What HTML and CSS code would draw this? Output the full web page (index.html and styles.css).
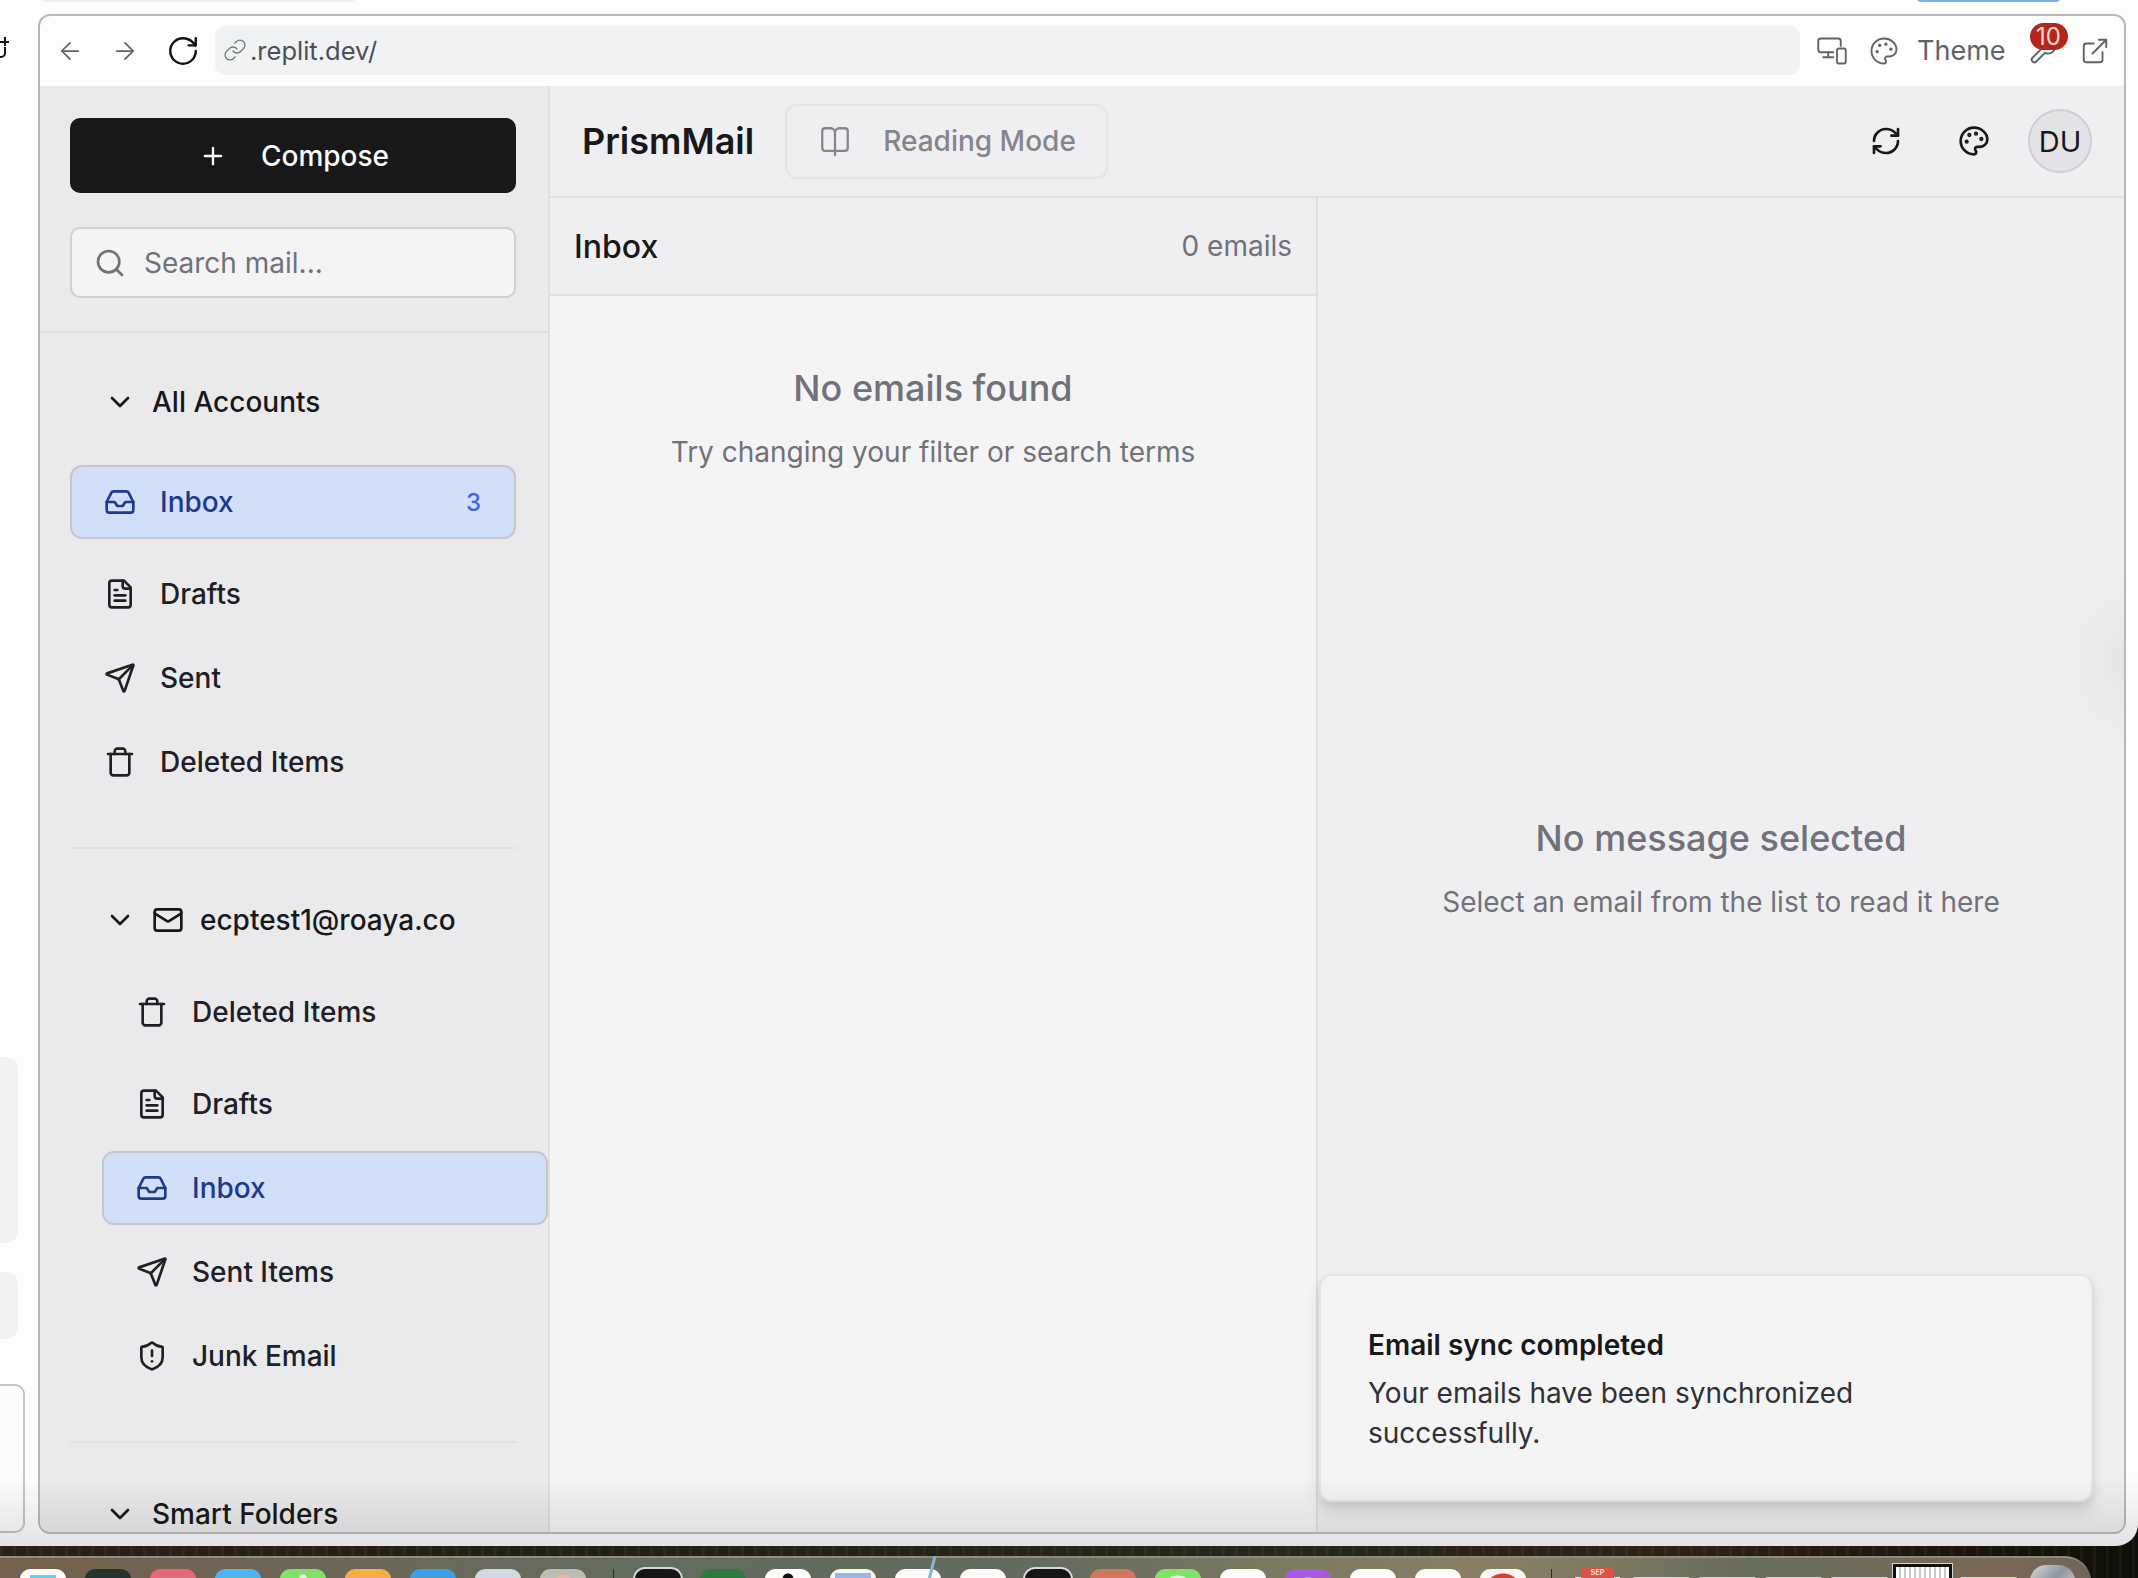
FILE: index.html
```html
<!DOCTYPE html>
<html lang="en">
<head>
<meta charset="utf-8">
<title>PrismMail</title>
<link rel="stylesheet" href="styles.css">
</head>
<body>
<svg class="defs" width="0" height="0" aria-hidden="true">
  <symbol id="i-left" viewBox="0 0 24 24"><path d="m12 19-7-7 7-7"/><path d="M19 12H5"/></symbol>
  <symbol id="i-right" viewBox="0 0 24 24"><path d="M5 12h14"/><path d="m12 5 7 7-7 7"/></symbol>
  <symbol id="i-reload" viewBox="0 0 24 24"><path d="M21 12a9 9 0 1 1-9-9c2.52 0 4.93 1 6.74 2.74L21 8"/><path d="M21 3v5h-5"/></symbol>
  <symbol id="i-link" viewBox="0 0 24 24"><path d="M10 13a5 5 0 0 0 7.54.54l3-3a5 5 0 0 0-7.07-7.07l-1.72 1.71"/><path d="M14 11a5 5 0 0 0-7.54-.54l-3 3a5 5 0 0 0 7.07 7.07l1.71-1.71"/></symbol>
  <symbol id="i-plus" viewBox="0 0 24 24"><path d="M5 12h14"/><path d="M12 5v14"/></symbol>
  <symbol id="i-search" viewBox="0 0 24 24"><circle cx="11" cy="11" r="8"/><path d="m21 21-4.3-4.3"/></symbol>
  <symbol id="i-chevron" viewBox="0 0 24 24"><path d="m6 9 6 6 6-6"/></symbol>
  <symbol id="i-inbox" viewBox="0 0 24 24"><polyline points="22 12 16 12 14 15 10 15 8 12 2 12"/><path d="M5.45 5.11 2 12v6a2 2 0 0 0 2 2h16a2 2 0 0 0 2-2v-6l-3.45-6.89A2 2 0 0 0 16.76 4H7.24a2 2 0 0 0-1.79 1.11z"/></symbol>
  <symbol id="i-file" viewBox="0 0 24 24"><path d="M15 2H6a2 2 0 0 0-2 2v16a2 2 0 0 0 2 2h12a2 2 0 0 0 2-2V7Z"/><path d="M14 2v4a2 2 0 0 0 2 2h4"/><path d="M10 9H8"/><path d="M16 13H8"/><path d="M16 17H8"/></symbol>
  <symbol id="i-send" viewBox="0 0 24 24"><path d="M14.536 21.686a.5.5 0 0 0 .937-.024l6.5-19a.496.496 0 0 0-.635-.635l-19 6.5a.5.5 0 0 0-.024.937l7.93 3.18a2 2 0 0 1 1.112 1.11z"/><path d="m21.854 2.147-10.94 10.939"/></symbol>
  <symbol id="i-trash" viewBox="0 0 24 24"><path d="M3 6h18"/><path d="M19 6v14c0 1-1 2-2 2H7c-1 0-2-1-2-2V6"/><path d="M8 6V4c0-1 1-2 2-2h4c1 0 2 1 2 2v2"/></symbol>
  <symbol id="i-mail" viewBox="0 0 24 24"><rect width="20" height="16" x="2" y="4" rx="2"/><path d="m22 7-8.97 5.7a1.94 1.94 0 0 1-2.06 0L2 7"/></symbol>
  <symbol id="i-shield" viewBox="0 0 24 24"><path d="M20 13c0 5-3.5 7.5-7.66 8.95a1 1 0 0 1-.67-.01C7.5 20.5 4 18 4 13V6a1 1 0 0 1 1-1c2 0 4.5-1.2 6.24-2.72a1.17 1.17 0 0 1 1.52 0C14.51 3.81 17 5 19 5a1 1 0 0 1 1 1z"/><path d="M12 8v4"/><path d="M12 16h.01"/></symbol>
  <symbol id="i-book" viewBox="0 0 24 24"><path d="M12 6v16"/><path d="M12 19H5a2 2 0 0 1-2-2V5a2 2 0 0 1 2-2h4a3 3 0 0 1 3 3 3 3 0 0 1 3-3h4a2 2 0 0 1 2 2v12a2 2 0 0 1-2 2h-7z"/></symbol>
  <symbol id="i-refresh" viewBox="0 0 24 24"><path d="M3 12a9 9 0 0 1 9-9 9.75 9.75 0 0 1 6.74 2.74L21 8"/><path d="M21 3v5h-5"/><path d="M21 12a9 9 0 0 1-9 9 9.75 9.75 0 0 1-6.74-2.74L3 16"/><path d="M8 16H3v5"/></symbol>
  <symbol id="i-palette" viewBox="0 0 24 24"><circle cx="13.5" cy="6.5" r=".6" class="dot"/><circle cx="17.5" cy="10.5" r=".6" class="dot"/><circle cx="8.5" cy="7.5" r=".6" class="dot"/><circle cx="6.5" cy="12.5" r=".6" class="dot"/><path d="M12 2C6.5 2 2 6.5 2 12s4.5 10 10 10c.926 0 1.648-.746 1.648-1.688 0-.437-.18-.835-.437-1.125-.29-.289-.438-.652-.438-1.125a1.64 1.64 0 0 1 1.668-1.668h1.996c3.051 0 5.555-2.503 5.555-5.554C21.965 6.012 17.461 2 12 2z"/></symbol>
  <symbol id="i-wrench" viewBox="0 0 24 24"><path d="M14.7 6.3a1 1 0 0 0 0 1.4l1.6 1.6a1 1 0 0 0 1.4 0l3.77-3.77a6 6 0 0 1-7.94 7.94l-6.91 6.91a2.12 2.12 0 0 1-3-3l6.91-6.91a6 6 0 0 1 7.94-7.94l-3.76 3.76z"/></symbol>
  <symbol id="i-external" viewBox="0 0 24 24"><path d="M15 3h6v6"/><path d="M10 14 21 3"/><path d="M18 13v6a2 2 0 0 1-2 2H5a2 2 0 0 1-2-2V8a2 2 0 0 1 2-2h6"/></symbol>
  <symbol id="i-devices" viewBox="0 0 24 24"><path d="M19 8V4a2 2 0 0 0-2-2H3a2 2 0 0 0-2 2v7a2 2 0 0 0 2 2h10"/><path d="M9 13v4"/><path d="M5 17h8"/><rect x="16" y="10" width="7" height="12" rx="1.6"/></symbol>
</svg>

<div class="desktop">
  <div class="tab tab-gray"></div>
  <div class="tab tab-blue"></div>
  <svg class="edge-glyph" viewBox="0 0 9 22"><path d="M-6 14v3a4 4 0 0 0 4 4h3a4 4 0 0 0 4-4v-6"/><path d="M5 1v9"/><path d="M0 6h9"/></svg>
  <div class="side-card side-card-a"></div>
  <div class="side-card side-card-b"></div>
  <div class="side-card side-card-c"></div>

  <div class="window">
    <header class="toolbar">
      <svg class="ico nav-ico"><use href="#i-left"/></svg>
      <svg class="ico nav-ico"><use href="#i-right"/></svg>
      <svg class="ico reload-ico"><use href="#i-reload"/></svg>
      <div class="url-bar">
        <svg class="ico link-ico"><use href="#i-link"/></svg>
        <span>.replit.dev/</span>
      </div>
      <div class="tool-group">
        <svg class="ico tool-ico"><use href="#i-devices"/></svg>
        <svg class="ico tool-ico palette-tool"><use href="#i-palette"/></svg>
        <span class="theme-label">Theme</span>
        <span class="wrench-wrap">
          <svg class="ico tool-ico"><use href="#i-wrench"/></svg>
          <span class="badge">10</span>
        </span>
        <svg class="ico tool-ico"><use href="#i-external"/></svg>
      </div>
    </header>

    <div class="app">
      <aside class="sidebar">
        <div class="side-top">
          <button class="compose">
            <svg class="ico compose-ico"><use href="#i-plus"/></svg>
            <span>Compose</span>
          </button>
          <div class="search">
            <svg class="ico search-ico"><use href="#i-search"/></svg>
            <span>Search mail...</span>
          </div>
        </div>

        <nav class="side-nav">
          <section class="nav-section">
            <div class="section-head">
              <svg class="ico chev"><use href="#i-chevron"/></svg>
              <span>All Accounts</span>
            </div>
            <ul class="folders">
              <li class="folder active">
                <svg class="ico"><use href="#i-inbox"/></svg>
                <span class="folder-name">Inbox</span>
                <span class="count">3</span>
              </li>
              <li class="folder"><svg class="ico"><use href="#i-file"/></svg><span class="folder-name">Drafts</span></li>
              <li class="folder"><svg class="ico"><use href="#i-send"/></svg><span class="folder-name">Sent</span></li>
              <li class="folder"><svg class="ico"><use href="#i-trash"/></svg><span class="folder-name">Deleted Items</span></li>
            </ul>
          </section>

          <section class="nav-section">
            <div class="section-head account-head">
              <svg class="ico chev"><use href="#i-chevron"/></svg>
              <svg class="ico mail-ico"><use href="#i-mail"/></svg>
              <span>ecptest1@roaya.co</span>
            </div>
            <ul class="folders sub">
              <li class="folder"><svg class="ico"><use href="#i-trash"/></svg><span class="folder-name">Deleted Items</span></li>
              <li class="folder"><svg class="ico"><use href="#i-file"/></svg><span class="folder-name">Drafts</span></li>
              <li class="folder active"><svg class="ico"><use href="#i-inbox"/></svg><span class="folder-name">Inbox</span></li>
              <li class="folder"><svg class="ico"><use href="#i-send"/></svg><span class="folder-name">Sent Items</span></li>
              <li class="folder"><svg class="ico"><use href="#i-shield"/></svg><span class="folder-name">Junk Email</span></li>
            </ul>
          </section>

          <section class="nav-section last">
            <div class="section-head">
              <svg class="ico chev"><use href="#i-chevron"/></svg>
              <span>Smart Folders</span>
            </div>
          </section>
        </nav>
      </aside>

      <main class="main">
        <header class="main-head">
          <h1 class="brand">PrismMail</h1>
          <button class="reading">
            <svg class="ico book-ico"><use href="#i-book"/></svg>
            <span>Reading Mode</span>
          </button>
          <div class="head-actions">
            <svg class="ico action-ico"><use href="#i-refresh"/></svg>
            <svg class="ico action-ico"><use href="#i-palette"/></svg>
            <div class="avatar">DU</div>
          </div>
        </header>
        <div class="panes">
          <section class="list-pane">
            <div class="list-head">
              <h2>Inbox</h2>
              <span>0 emails</span>
            </div>
            <div class="empty-list">
              <h3>No emails found</h3>
              <p>Try changing your filter or search terms</p>
            </div>
          </section>
          <section class="detail-pane">
            <h3>No message selected</h3>
            <p>Select an email from the list to read it here</p>
          </section>
        </div>
      </main>
    </div>

    <div class="toast">
      <strong>Email sync completed</strong>
      <p>Your emails have been synchronized successfully.</p>
    </div>
    <div class="edge-shade"></div>
  </div>
</div>

<footer class="dock">
  <div class="dock-group">
    <i class="app-icon c-white d-cyan"></i><i class="app-icon c-ink"></i><i class="app-icon c-rose"></i><i class="app-icon c-sky"></i><i class="app-icon c-lime d-dot"></i><i class="app-icon c-amber"></i><i class="app-icon c-blue"></i><i class="app-icon c-mist"></i><i class="app-icon c-stone"></i>
  </div>
  <b class="dock-sep first"></b>
  <div class="dock-group">
    <i class="app-icon c-black"></i><i class="app-icon c-green"></i><i class="app-icon c-white d-blackdot"></i><i class="app-icon c-peri"></i><i class="app-icon c-white d-pencil"></i><i class="app-icon c-white"></i><i class="app-icon c-black"></i><i class="app-icon c-coral"></i><i class="app-icon c-lime d-ring"></i><i class="app-icon c-white"></i><i class="app-icon c-violet d-ring"></i><i class="app-icon c-white"></i><i class="app-icon c-white"></i><i class="app-icon c-red"></i>
  </div>
  <b class="dock-sep second"></b>
  <div class="dock-group thumbs">
    <i class="cal"><em>SEP</em></i><i class="thumb"></i><i class="thumb"></i><i class="thumb"></i><i class="thumb"></i><i class="thumb win"></i><i class="thumb"></i><i class="bin"></i>
  </div>
</footer>
</body>
</html>
```

FILE: styles.css
```css
* { box-sizing: border-box; }

html, body { margin: 0; padding: 0; }

body {
  position: relative;
  width: 2138px;
  height: 1578px;
  overflow: hidden;
  font-family: Inter, "Liberation Sans", sans-serif;
  color: #18181b;
  background:
    repeating-linear-gradient(90deg, rgba(200,210,170,.05) 0 3px, rgba(0,0,0,0) 3px 13px),
    linear-gradient(90deg, #2b1e16 0%, #1f2114 30%, #24271a 60%, #2e2015 78%, #0e0f0a 100%);
}

.defs { position: absolute; }

ul { list-style: none; margin: 0; padding: 0; }
h1, h2, h3, p { margin: 0; }
button { font: inherit; color: inherit; }

.ico {
  flex: none;
  width: 32px;
  height: 32px;
  fill: none;
  stroke: currentColor;
  stroke-width: 2;
  stroke-linecap: round;
  stroke-linejoin: round;
}
.dot { fill: currentColor; }

/* ---------- desktop canvas ---------- */
.desktop {
  position: relative;
  height: 1546px;
  background: #fdfdfd;
  border-bottom-right-radius: 22px;
  overflow: hidden;
}
.desktop::after {
  content: "";
  position: absolute;
  left: 0;
  right: 0;
  bottom: 0;
  height: 70px;
  background: linear-gradient(180deg, rgba(0,0,0,0), rgba(0,0,0,.1));
  pointer-events: none;
}
.tab { position: absolute; top: -6px; height: 8px; border-radius: 4px; }
.tab-gray { left: 41px; width: 314px; background: #eeeff1; }
.tab-blue { left: 1917px; width: 143px; background: #78aef5; }

.edge-glyph {
  position: absolute;
  left: 0;
  top: 36px;
  width: 9px;
  height: 22px;
  fill: none;
  stroke: #111;
  stroke-width: 2;
}
.side-card { position: absolute; left: -20px; }
.side-card-a { top: 1057px; width: 38px; height: 186px; background: #f1f2f3; border-radius: 12px; }
.side-card-b { top: 1272px; width: 38px; height: 67px; background: #f1f2f3; border-radius: 12px; }
.side-card-c { top: 1384px; width: 45px; height: 149px; background: #fcfcfc; border: 2px solid #c4c4c4; border-radius: 10px; }

.window {
  position: absolute;
  left: 38px;
  top: 14px;
  width: 2088px;
  height: 1520px;
  display: flex;
  flex-direction: column;
  background: #fdfdfd;
  border: 2px solid #b9b9bb;
  border-radius: 12px;
  overflow: hidden;
}

/* ---------- browser toolbar ---------- */
.toolbar {
  flex: none;
  height: 70px;
  display: flex;
  align-items: center;
  padding: 0 16px 0 0;
  color: #5f6368;
}
.nav-ico { width: 28px; height: 28px; stroke-width: 1.5; margin-left: 16px; margin-right: 12px; }
.nav-ico + .nav-ico { margin-left: 15px; margin-right: 0; }
.reload-ico { width: 34px; height: 34px; stroke-width: 1.7; color: #111; margin: 0 15px 0 27px; }
.url-bar {
  flex: none;
  width: 1585px;
  height: 49px;
  margin-top: -2px;
  display: flex;
  align-items: center;
  gap: 3px;
  padding-left: 8px;
  background: #f1f2f4;
  border-radius: 10px;
  font-size: 25.5px;
  color: #4b4f57;
}
.link-ico { width: 24px; height: 24px; stroke-width: 1.3; color: #70747c; }
.tool-group { display: flex; align-items: center; margin-left: 17px; }
.tool-ico { width: 30px; height: 30px; stroke-width: 1.5; }
.palette-tool { margin-left: 22px; }
.theme-label { font-size: 27px; margin: -2px 22px 0 18px; }
.wrench-wrap { position: relative; display: block; width: 30px; height: 30px; margin-right: 22px; }
.badge {
  position: absolute;
  left: 2px;
  top: -13px;
  width: 38px;
  height: 27px;
  border-radius: 14px;
  background: #b2261c;
  color: #fbd4cf;
  font-size: 24px;
  line-height: 27px;
  text-align: center;
}

/* ---------- application ---------- */
.app { flex: 1; min-height: 0; display: flex; }

.sidebar {
  flex: none;
  width: 510px;
  display: flex;
  flex-direction: column;
  background: #eaeaec;
  border-right: 2px solid #dfdfe2;
}
.side-top {
  flex: none;
  display: flex;
  flex-direction: column;
  gap: 34px;
  padding: 32px 32px 33px 30px;
  border-bottom: 2px solid #e1e1e4;
}
.compose {
  height: 75px;
  display: flex;
  align-items: center;
  justify-content: center;
  gap: 34px;
  padding: 0 0 0 2px;
  border: 0;
  border-radius: 10px;
  background: #18181b;
  color: #fafafa;
  font-size: 28px;
  font-weight: 500;
}
.compose-ico { width: 28px; height: 28px; }
.search {
  height: 71px;
  display: flex;
  align-items: center;
  gap: 18px;
  padding-left: 22px;
  background: #f4f4f5;
  border: 2px solid #d0d0d4;
  border-radius: 10px;
  color: #71717a;
  font-size: 28px;
}
.search-ico { width: 32px; height: 32px; }

.side-nav { flex: 1; min-height: 0; overflow: hidden; padding: 32px 32px 0 30px; }
.nav-section { padding-bottom: 48px; margin-bottom: 34px; border-bottom: 2px solid #e1e1e4; }
.nav-section.last { border-bottom: 0; }

.section-head {
  height: 74px;
  display: flex;
  align-items: center;
  gap: 16px;
  padding-left: 34px;
  font-size: 28px;
  font-weight: 500;
}
.chev { width: 32px; height: 32px; }
.account-head { gap: 0; }
.account-head .chev { margin-right: 17px; }
.mail-ico { width: 32px; height: 32px; margin-left: -1px; margin-right: 16px; }

.folders { display: flex; flex-direction: column; gap: 10px; margin-top: 26px; }
.folders.sub { margin-top: 18px; padding-left: 32px; margin-right: -32px; }
.folder {
  height: 74px;
  display: flex;
  align-items: center;
  gap: 24px;
  padding: 0 33px 0 32px;
  border: 2px solid transparent;
  border-radius: 12px;
  font-size: 28px;
  font-weight: 500;
  color: #202024;
}
.folder:first-child { margin-bottom: 8px; }
.folder-name { flex: 1; }
.folder.active {
  background: #d1dff8;
  border-color: #c4c6cc;
  color: #1e3a8a;
}
.count { font-size: 24px; color: #3a64e0; }

/* ---------- main column ---------- */
.main { flex: 1; min-width: 0; display: flex; flex-direction: column; background: #efeff1; }
.main-head {
  flex: none;
  height: 112px;
  display: flex;
  align-items: center;
  padding: 0 32px 0 32px;
  border-bottom: 2px solid #e0e0e3;
}
.brand { font-size: 36px; font-weight: 600; line-height: 1; margin-right: 31px; }
.reading {
  width: 323px;
  height: 75px;
  display: flex;
  align-items: center;
  gap: 31px;
  padding: 0 0 0 31px;
  background: transparent;
  border: 2px solid #e5e5e8;
  border-radius: 12px;
  color: #85858c;
  font-size: 28px;
  font-weight: 500;
}
.book-ico { width: 34px; height: 34px; stroke-width: 1.6; }
.head-actions { margin-left: auto; display: flex; align-items: center; }
.action-ico { width: 32px; height: 32px; margin-right: 56px; color: #18181b; }
.action-ico + .action-ico { margin-right: 38px; }
.avatar {
  width: 64px;
  height: 64px;
  display: flex;
  align-items: center;
  justify-content: center;
  border-radius: 50%;
  background: #e4e4e7;
  border: 2px solid #cfcfd3;
  font-size: 29px;
  font-weight: 400;
}

.panes { flex: 1; min-height: 0; display: flex; }
.list-pane {
  flex: none;
  width: 768px;
  display: flex;
  flex-direction: column;
  background: #f4f4f5;
  border-right: 2px solid #e0e0e3;
}
.list-head {
  flex: none;
  height: 98px;
  display: flex;
  align-items: center;
  justify-content: space-between;
  padding: 0 24px;
  background: #efeff1;
  border-bottom: 2px solid #e0e0e3;
}
.list-head h2 { font-size: 32px; font-weight: 500; }
.list-head span { font-size: 28px; color: #71717a; }
.empty-list { padding-top: 68px; text-align: center; }
.empty-list h3, .detail-pane h3 { font-size: 36px; font-weight: 500; line-height: 48px; color: #71717a; }
.empty-list p, .detail-pane p { font-size: 28px; line-height: 40px; margin-top: 20px; color: #71717a; }

.detail-pane {
  flex: 1;
  display: flex;
  flex-direction: column;
  align-items: center;
  padding-top: 616px;
}

.toast {
  position: absolute;
  left: 1279px;
  top: 1258px;
  width: 774px;
  height: 228px;
  padding: 49px 47px 0;
  background: #f4f4f5;
  border: 2px solid #e4e4e7;
  border-radius: 12px;
  box-shadow: 0 10px 16px rgba(0,0,0,.1), 0 4px 6px rgba(0,0,0,.06);
}
.toast strong { display: block; font-size: 28px; line-height: 40px; font-weight: 600; }
.toast p { font-size: 28px; line-height: 40px; margin-top: 8px; width: 560px; color: #303036; }

.edge-shade {
  position: absolute;
  right: 0;
  top: 560px;
  width: 60px;
  height: 170px;
  background: radial-gradient(ellipse at 100% 50%, rgba(120,100,100,.08), rgba(120,100,100,0) 70%);
  pointer-events: none;
}

/* ---------- dock ---------- */
.dock {
  position: absolute;
  left: 0;
  top: 1556px;
  width: 2091px;
  height: 60px;
  display: flex;
  align-items: flex-start;
  padding: 11px 0 0 20px;
  border-top: 2px solid #8d8c78;
  border-top-right-radius: 26px;
  background: linear-gradient(90deg, #74604f 0%, #6f6557 12%, #646c5c 30%, #616a5c 48%, #7c7a62 62%, #8a7f66 72%, #666c5b 84%, #7a6a57 95%, #716459 100%);
}
.dock-group { display: flex; gap: 19px; }
.app-icon { position: relative; display: block; width: 46px; height: 40px; border-radius: 10px; }
.dock-sep { flex: none; width: 1px; height: 30px; background: #2d2d28; }
.dock-sep.first { margin: 0 21px 0 27px; }
.dock-sep.second { margin: 0 23px 0 25px; }
.c-white { background: #fbfbfb; }
.c-ink { background: #26322e; }
.c-rose { background: #e9677b; }
.c-sky { background: linear-gradient(#fff, #fff) center 10px / 24px 12px no-repeat, #4fb4f5; }
.c-lime { background: #7fe36a; }
.c-amber { background: #f4b142; }
.c-blue { background: #3d9fe9; }
.c-mist { background: radial-gradient(circle at 50% 22px, #2a2a2a 0 12px, rgba(0,0,0,0) 13px), #cfdbe0; }
.c-stone { background: radial-gradient(circle at 50% 14px, #e9b8a0 0 8px, rgba(0,0,0,0) 9px), #bdbdb6; }
.c-black { background: #151515; box-shadow: 0 0 0 2px #d5d8d6; }
.c-green { background: #2e7a41; }
.c-peri { background: linear-gradient(#9ab7ea, #9ab7ea) center 4px / 36px 40px no-repeat, #f6f6f6; }
.c-coral { background: #d0785c; }
.c-violet { background: #a55be0; }
.c-red { background: radial-gradient(circle at 50% 24px, #d94034 0 19px, #f8f6f4 20px); }
.d-cyan { background: linear-gradient(#5fd0f5, #5fd0f5) center 6px / 26px 12px no-repeat, #fbfbfb; }
.d-dot { background: radial-gradient(circle at 50% 9px, #fff 0 3px, rgba(0,0,0,0) 4px), #7fe36a; }
.d-blackdot { background: radial-gradient(circle at 50% 10px, #111 0 5px, rgba(0,0,0,0) 6px), #fbfbfb; }
.d-ring.c-lime { background: radial-gradient(circle at 50% 22px, #7fe36a 0 10px, #fff 11px 15px, rgba(0,0,0,0) 16px), #7fe36a; }
.d-ring.c-violet { background: radial-gradient(circle at 50% 22px, #a55be0 0 8px, #fff 9px 13px, rgba(0,0,0,0) 14px), #a55be0; }
.d-pencil::after {
  content: "";
  position: absolute;
  right: 8px;
  top: -13px;
  width: 3px;
  height: 28px;
  background: #8fb2d4;
  transform: rotate(14deg);
}

.thumbs { gap: 9px; margin-top: 8px; }
.cal {
  position: relative;
  flex: none;
  width: 45px;
  height: 20px;
  margin-right: 4px;
  margin-top: -9px;
  display: block;
  font-style: normal;
  background: linear-gradient(#f1f1ee, #f1f1ee) 0 9px / 45px 20px no-repeat;
}
.cal em {
  display: block;
  width: 33px;
  height: 10px;
  margin: 0 auto;
  background: #d9534a;
  border-radius: 2px 2px 0 0;
  text-align: center;
  font-style: normal;
  font-weight: 600;
  font-size: 7px;
  line-height: 10px;
  color: #fbe4e0;
}
.thumb { flex: none; display: block; width: 57px; height: 18px; background: #dcdcd8; border-radius: 2px 2px 0 0; }
.thumb.win {
  width: 59px;
  height: 30px;
  margin-top: -13px;
  margin-left: -4px;
  margin-right: -1px;
  background: repeating-linear-gradient(90deg, #fff 0 3px, #c9c9c9 3px 5px);
  border: 3px solid #111;
  border-radius: 0;
  box-shadow: 0 0 0 1px #cfd6d6;
}
.bin {
  flex: none;
  display: block;
  width: 45px;
  height: 30px;
  margin-top: -12px;
  margin-left: 4px;
  background: linear-gradient(135deg, #d8dcdc, #8d97a0 50%, #d0d4d2);
  border-radius: 16px 16px 0 0;
}
```
